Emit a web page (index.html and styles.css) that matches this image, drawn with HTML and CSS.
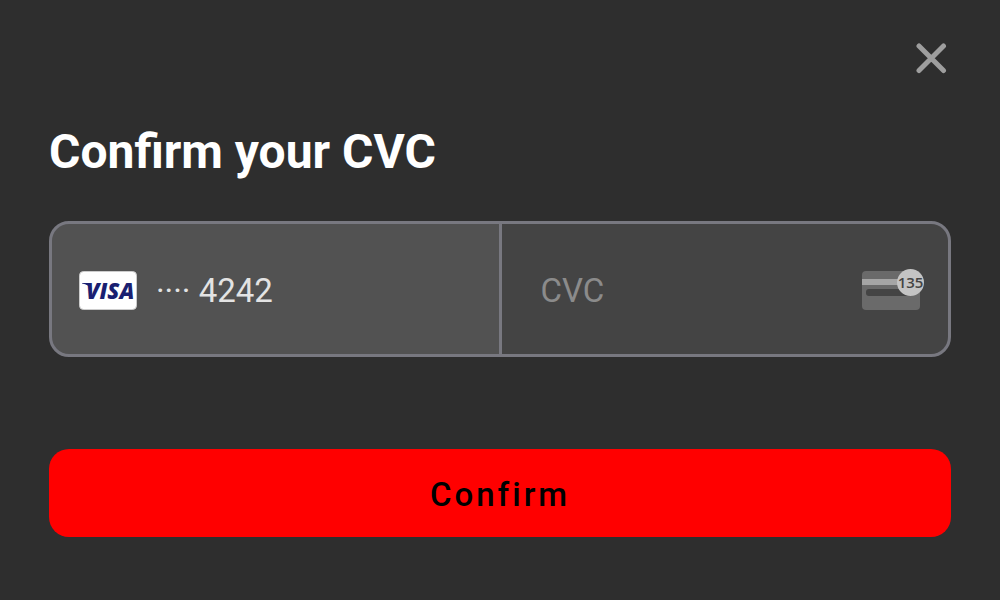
FILE: index.html
```html
<!DOCTYPE html>
<html lang="en">
<head>
<meta charset="utf-8">
<meta name="viewport" content="width=device-width, initial-scale=1">
<title>Confirm your CVC</title>
<link rel="stylesheet" href="styles.css">
</head>
<body>
<main class="sheet">
  <header class="top">
    <button class="close" type="button" aria-label="Close">
      <svg width="32" height="32" viewBox="0 0 32 32" aria-hidden="true"><path d="M4 4 28.500 28.500M28.500 4 4 28.500"/></svg>
    </button>
  </header>
  <h1 class="title">Confirm your CVC</h1>
  <form class="form">
    <div class="fields">
      <div class="saved">
        <svg class="visa" width="58" height="40" viewBox="0 0 58 40" role="img" aria-label="Visa">
          <rect x="0.5" y="0.500" width="57" height="38" rx="4" fill="#fff" stroke="#ccc"/>
          <path d="M3 12h8l1.500 6c-2-2.800-5-4.400-9.500-5.400z" fill="#1a1f71"/>
          <text x="7" y="28" class="visa-text">VISA</text>
        </svg>
        <span class="number">···· 4242</span>
      </div>
      <label class="cvc">
        <input class="input" type="text" inputmode="numeric" placeholder="CVC" aria-label="CVC">
        <svg class="hint" width="64" height="44" viewBox="0 1 64 44" aria-hidden="true">
          <rect x="1" y="3" width="58" height="39" rx="4" fill="#6a6a6a"/>
          <rect x="1" y="11" width="58" height="6" fill="#a5a5a5"/>
          <rect x="5" y="21" width="48" height="7" rx="3" fill="#444"/>
          <circle cx="49.500" cy="14.500" r="13.500" fill="#c4c4c4"/>
          <text x="49.500" y="20" text-anchor="middle" class="hint-text">135</text>
        </svg>
      </label>
    </div>
    <button class="confirm" type="button">Confirm</button>
  </form>
</main>
</body>
</html>
```
FILE: styles.css
```css
* { box-sizing: border-box; }
body {
  margin: 0;
  background: #2e2e2e;
  color: #fff;
  font-family: Roboto, "Liberation Sans", sans-serif;
}
.sheet { padding: 42px 49px 48px; }
.top { display: flex; justify-content: flex-end; padding-right: 4px; }
.close { display: flex; padding: 0; border: 0; background: none; cursor: pointer; }
.close path { fill: none; stroke: #9e9e9e; stroke-width: 5; stroke-linecap: round; }
.title { margin: 48px 0 39px; font-size: 48px; line-height: 60px; font-weight: 700; }
.form { display: flex; flex-direction: column; gap: 92px; }
.fields {
  display: grid;
  grid-template-columns: repeat(2, minmax(0, 1fr));
  gap: 3px;
  border: 3px solid #787880;
  border-radius: 20px;
  background: #787880;
  overflow: hidden;
}
.saved {
  display: flex;
  align-items: center;
  gap: 19px;
  min-height: 130px;
  padding: 4px 0 0 27px;
  background: #525252;
}
.number { color: #e3e3e3; font-size: 33px; line-height: 40px; }
.visa-text { fill: #1a1f71; font: italic 800 22px "Open Sans", "Noto Sans", sans-serif; }
.cvc {
  display: flex;
  align-items: center;
  gap: 16px;
  padding: 4px 23px 0 39px;
  background: #444;
}
.input {
  flex: 1;
  min-width: 0;
  padding: 0;
  border: 0;
  outline: 0;
  background: none;
  color: #e3e3e3;
  font: 33px/40px Roboto, "Liberation Sans", sans-serif;
}
.input::placeholder { color: #8b8b8b; opacity: 1; }
.hint-text { fill: #444; font: 600 15px "Open Sans", "Noto Sans", sans-serif; }
.confirm {
  padding: 26px 24px 22px;
  border: 0;
  border-radius: 20px;
  background: #f00;
  color: #000;
  font: 500 33px/40px Roboto, "Liberation Sans", sans-serif;
  letter-spacing: 3px;
  cursor: pointer;
}
```
